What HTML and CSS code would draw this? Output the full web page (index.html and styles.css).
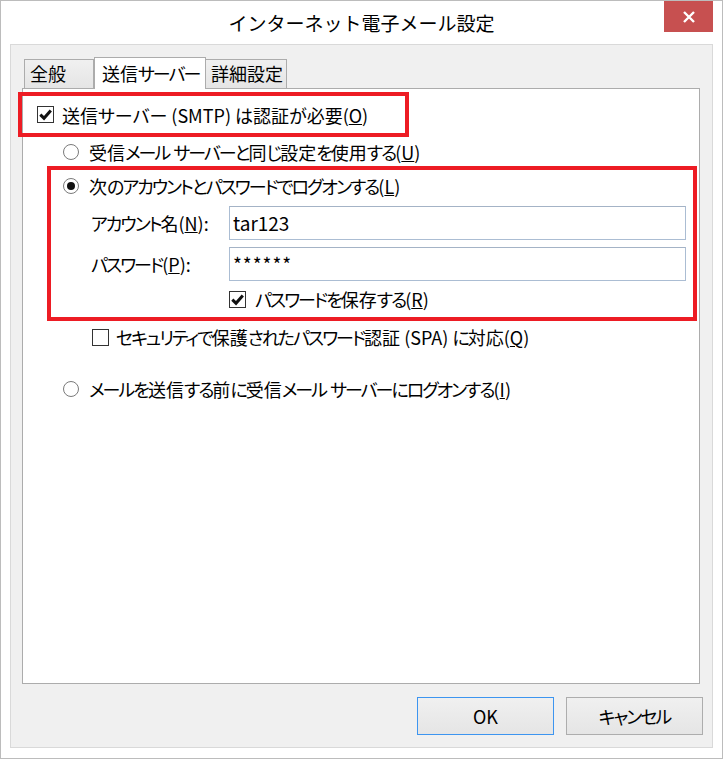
FILE: index.html
```html
<!DOCTYPE html>
<html lang="ja">
<head>
<meta charset="utf-8">
<title>インターネット電子メール設定</title>
<link rel="stylesheet" href="styles.css">
</head>
<body>
<div class="window">
  <div class="titlebar">
    <div class="title">インターネット電子メール設定</div>
    <div class="close">
      <svg width="14" height="14" viewBox="0 0 14 14"><path d="M2 2 L12 12 M12 2 L2 12" stroke="#fff" stroke-width="2.4" fill="none"/></svg>
    </div>
  </div>
  <div class="client">
    <div class="tabs">
      <div class="tab tab-general">全般</div>
      <div class="tab tab-active">送信<span class="k">サーバー</span></div>
      <div class="tab tab-detail">詳細設定</div>
    </div>
    <div class="panel">
      <div class="hl hl-auth">
        <div class="row">
          <span class="cb"><svg width="15" height="15" viewBox="0 0 15 15"><path d="M2.3 7.6 L6 11.2 L12.8 3.4" stroke="#111" stroke-width="3" fill="none"/></svg></span>
          <span>送信サーバー (SMTP) は認証が必要(<u>O</u>)</span>
        </div>
      </div>
      <div class="row row-radio1">
        <span class="rb"></span>
        <span>受信<span class="k">メール</span> <span class="k">サーバーと</span>同<span class="k">じ</span>設定<span class="k">を</span>使用<span class="k">する</span>(<u>U</u>)</span>
      </div>
      <div class="hl hl-account">
        <div class="row row-radio2">
          <span class="rb rb-on"></span>
          <span>次<span class="k">のアカウントとパスワードでログオンする</span>(<u>L</u>)</span>
        </div>
        <div class="field field-account">
          <span class="label"><span class="k">アカウント</span>名(<u>N</u>):</span>
          <div class="input">tar123</div>
        </div>
        <div class="field field-password">
          <span class="label"><span class="k">パスワード</span>(<u>P</u>):</span>
          <div class="input input-pw">******</div>
        </div>
        <div class="row row-save">
          <span class="cb"><svg width="15" height="15" viewBox="0 0 15 15"><path d="M2.3 7.6 L6 11.2 L12.8 3.4" stroke="#111" stroke-width="3" fill="none"/></svg></span>
          <span><span class="k">パスワードを</span>保存<span class="k">する</span>(<u>R</u>)</span>
        </div>
      </div>
      <div class="row row-spa">
        <span class="cb"></span>
        <span><span class="k">セキュリティで</span>保護<span class="k">されたパスワード</span>認証 (SPA) <span class="k">に</span>対応(<u>Q</u>)</span>
      </div>
      <div class="row row-radio3">
        <span class="rb"></span>
        <span><span class="k">メールを</span>送信<span class="k">する</span>前<span class="k">に</span>受信<span class="k">メール</span> <span class="k">サーバーにログオンする</span>(<u>I</u>)</span>
      </div>
    </div>
    <div class="buttons">
      <div class="btn btn-default">OK</div>
      <div class="btn"><span class="k">キャンセル</span></div>
    </div>
  </div>
</div>
</body>
</html>
```
FILE: styles.css
```css
* { box-sizing: border-box; }
html, body { margin: 0; padding: 0; background: #fff; }
body {
  font-family: "Noto Sans CJK JP", "Noto Sans", sans-serif;
  font-size: 18px;
  color: #000;
  font-feature-settings: "palt" 1;
}
.k { letter-spacing: -2px; }
.window {
  width: 723px;
  height: 759px;
  border: 1px solid #bcbcbc;
  background: #fff;
  display: flex;
  flex-direction: column;
}
.titlebar {
  height: 43px;
  display: grid;
  grid-template-columns: 1fr auto 1fr;
}
.title {
  grid-column: 2;
  font-size: 19px;
  line-height: 43px;
  font-feature-settings: normal;
}
.close {
  grid-column: 3;
  justify-self: end;
  width: 49px;
  height: 31px;
  margin-right: 9px;
  background: #c75050;
  display: flex;
  align-items: center;
  justify-content: center;
}
.client {
  flex: 1;
  margin: 0 9px 10px 9px;
  border: 1px solid #d9d9d9;
  background: #f0f0f0;
  padding: 12px 9px 0 11px;
  display: flex;
  flex-direction: column;
}
.tabs {
  display: flex;
  align-items: flex-end;
  padding-left: 2px;
  height: 31px;
}
.tab {
  height: 29px;
  border: 1px solid #acacac;
  border-bottom: none;
  background: linear-gradient(#f0f0f0, #e5e5e5);
  line-height: 27px;
  padding: 0 4px 0 5px;
  white-space: nowrap;
}
.tab-general { width: 70px; }
.tab-active {
  position: relative;
  z-index: 2;
  height: 32px;
  margin-bottom: -1px;
  width: 112px;
  background: #fff;
  padding: 0 4px 0 7px;
  line-height: 30px;
}
.tab-detail { width: 82px; margin-left: -1px; padding: 0 3px 0 5px; }
.panel {
  height: 596px;
  margin-right: 3px;
  border: 1px solid #acacac;
  background: #fff;
  padding-top: 3px;
}
.row {
  display: flex;
  align-items: center;
  white-space: nowrap;
}
.hl {
  border: 4px solid #ed1c24;
  margin-left: -5px;
}
.hl-auth {
  width: 391px;
  height: 45px;
  display: flex;
  align-items: center;
  padding-left: 15px;
}
.hl-auth .row { gap: 8px; }
.cb {
  width: 17px;
  height: 17px;
  border: 1px solid #333;
  background: #fff;
  display: flex;
  align-items: center;
  justify-content: center;
  flex: none;
}
.rb {
  width: 16px;
  height: 16px;
  border: 1px solid #7a7a7a;
  border-radius: 50%;
  background: #fff;
  flex: none;
  display: flex;
  align-items: center;
  justify-content: center;
}
.rb-on::after {
  content: "";
  width: 8px;
  height: 8px;
  border-radius: 50%;
  background: #111;
}
.row-radio1 {
  height: 29px;
  padding-left: 40px;
  gap: 10px;
}
.hl-account {
  width: 650px;
  height: 155px;
  margin-left: 24px;
  padding-left: 12px;
}
.row-radio2 {
  height: 32px;
  gap: 10px;
}
.field {
  display: flex;
  align-items: center;
  padding-left: 28px;
  white-space: nowrap;
}
.field-account { margin-top: 4px; }
.field-password { margin-top: 7px; }
.label { width: 138px; }
.input {
  width: 457px;
  height: 34px;
  border: 1px solid #abbdd3;
  border-top-color: #a4b3c6;
  background: #fff;
  padding-left: 3px;
  line-height: 31px;
  font-size: 19px;
}
.input-pw { letter-spacing: 1px; }
.row-save {
  height: 36px;
  padding-left: 166px;
  gap: 9px;
}
.row-spa {
  height: 32px;
  padding-left: 69px;
  gap: 7px;
}
.row-radio3 {
  height: 32px;
  margin-top: 20px;
  padding-left: 40px;
  gap: 10px;
}
.buttons {
  display: flex;
  justify-content: flex-end;
  gap: 12px;
  margin-top: 13px;
}
.btn {
  width: 137px;
  height: 38px;
  border: 1px solid #adadad;
  background: linear-gradient(#f0f0f0, #e5e5e5);
  display: flex;
  align-items: center;
  justify-content: center;
}
.btn-default { border-color: #3d95f0; }
```
